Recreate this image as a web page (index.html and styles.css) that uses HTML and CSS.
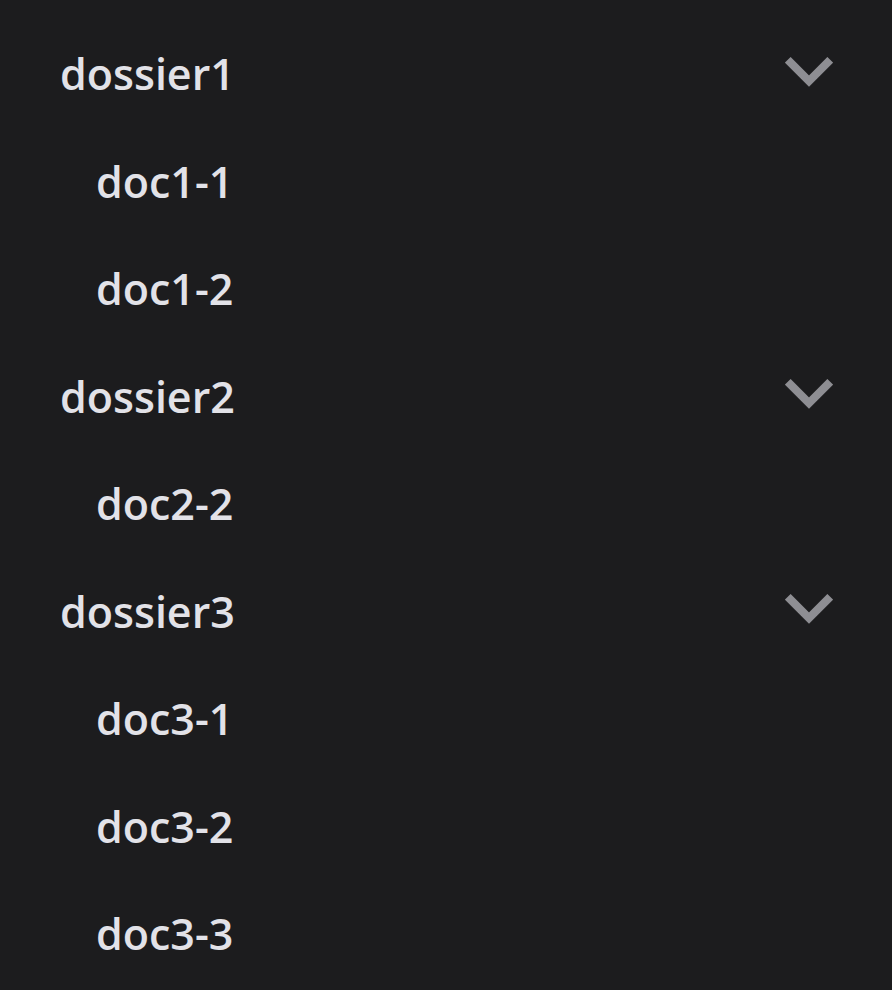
FILE: index.html
```html
<!DOCTYPE html>
<html>
<head>
<meta charset="utf-8">
<link rel="stylesheet" href="styles.css">
</head>
<body>
<nav class="tree">
  <div class="folder">
    <div class="folder-row"><span class="label">dossier1</span><svg class="chev" width="48" height="30" viewBox="0 0 48 30"><polyline points="2.8,2.8 24,24 45.2,2.8" /></svg></div>
    <div class="doc">doc1-1</div>
    <div class="doc">doc1-2</div>
  </div>
  <div class="folder">
    <div class="folder-row"><span class="label">dossier2</span><svg class="chev" width="48" height="30" viewBox="0 0 48 30"><polyline points="2.8,2.8 24,24 45.2,2.8" /></svg></div>
    <div class="doc">doc2-2</div>
  </div>
  <div class="folder">
    <div class="folder-row"><span class="label">dossier3</span><svg class="chev" width="48" height="30" viewBox="0 0 48 30"><polyline points="2.8,2.8 24,24 45.2,2.8" /></svg></div>
    <div class="doc">doc3-1</div>
    <div class="doc">doc3-2</div>
    <div class="doc">doc3-3</div>
  </div>
</nav>
</body>
</html>
```
FILE: styles.css
```css
html, body {
  margin: 0;
  padding: 0;
  background: #1c1c1e;
  height: 100%;
}
.tree {
  padding: 20px 59px 0 60px;
  font-family: "Open Sans", "Noto Sans", sans-serif;
  font-weight: 600;
  font-size: 43px;
  color: #e2e2e8;
}
.folder-row, .doc {
  height: 107.5px;
  line-height: 107.5px;
  display: flex;
  align-items: center;
  justify-content: space-between;
}
.folder-row .label {
  line-height: 1;
}
.doc {
  padding-left: 36px;
}
.chev {
  fill: none;
  stroke: #8e8e93;
  stroke-width: 8;
  stroke-linecap: butt;
  stroke-linejoin: miter;
  margin-top: -4px;
}
```
